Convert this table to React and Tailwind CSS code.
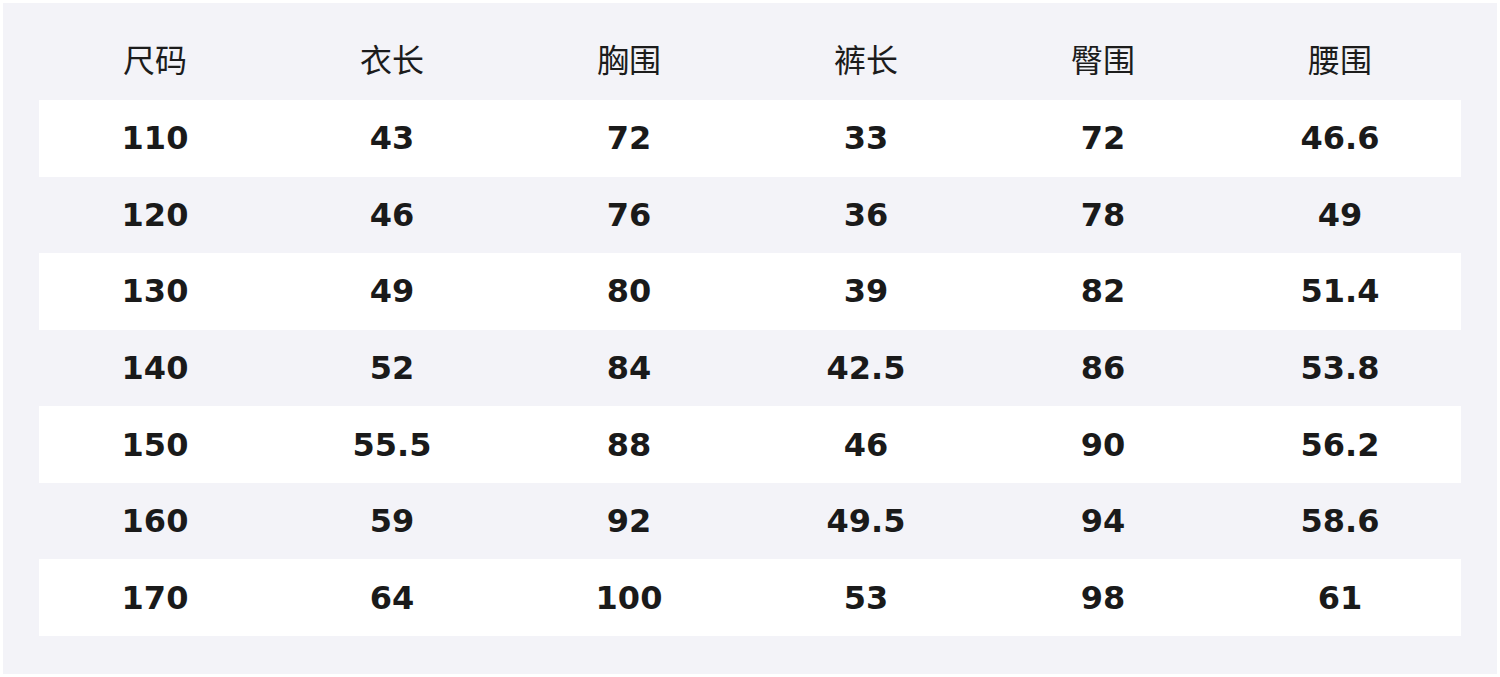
import React from 'react';

const headers = ['尺码', '衣长', '胸围', '裤长', '臀围', '腰围'];

const rows = [
    ['110', '43', '72', '33', '72', '46.6'],
    ['120', '46', '76', '36', '78', '49'],
    ['130', '49', '80', '39', '82', '51.4'],
    ['140', '52', '84', '42.5', '86', '53.8'],
    ['150', '55.5', '88', '46', '90', '56.2'],
    ['160', '59', '92', '49.5', '94', '58.6'],
    ['170', '64', '100', '53', '98', '61'],
];

function App() {
    return (
        <div className="w-[1500px] h-[677px] bg-white p-[3px]">
            <div className="h-full bg-[#f3f3f8] px-[36px] pb-[37px]">
                {/* header */}
                <div className="grid grid-cols-6 h-[97px] items-center text-[32px] text-[#1c1c1c] font-['Noto_Sans_CJK_SC',sans-serif] pt-[12px]">
                    {headers.map((h) => (
                        <div key={h} className="text-center pr-[5px]">{h}</div>
                    ))}
                </div>
                {/* body rows */}
                <div className="grid grid-rows-7 h-[536px]">
                    {rows.map((r, i) => (
                        <div
                            key={r[0]}
                            className={`grid grid-cols-6 items-center ${i % 2 === 0 ? 'bg-white' : ''}`}
                        >
                            {r.map((v, j) => (
                                <div key={j} className="text-center pr-[5px] text-[32px] font-bold text-[#1a1a1a] font-['DejaVu_Sans',sans-serif]">
                                    {v}
                                </div>
                            ))}
                        </div>
                    ))}
                </div>
            </div>
        </div>
    );
}

export default App;
